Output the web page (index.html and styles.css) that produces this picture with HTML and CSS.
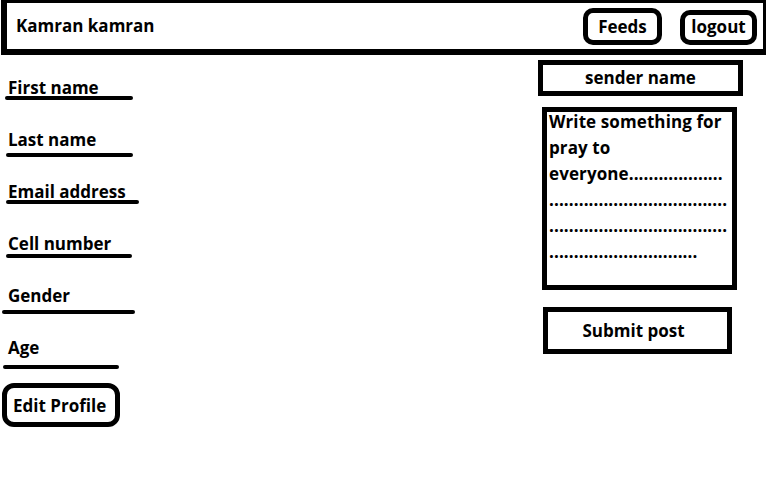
FILE: index.html
```html
<!DOCTYPE html>
<html>
<head>
<meta charset="utf-8">
<link rel="stylesheet" href="styles.css">
</head>
<body>
<header class="topbar">
  <div class="user-name">Kamran kamran</div>
  <nav class="nav">
    <div class="nav-btn nav-feeds">Feeds</div>
    <div class="nav-btn nav-logout">logout</div>
  </nav>
</header>
<main class="main">
  <section class="profile">
    <div class="field">
      <div class="label">First name</div>
      <div class="rule rule-1"></div>
    </div>
    <div class="field">
      <div class="label">Last name</div>
      <div class="rule rule-2"></div>
    </div>
    <div class="field">
      <div class="label">Email address</div>
      <div class="rule rule-3"></div>
    </div>
    <div class="field">
      <div class="label">Cell number</div>
      <div class="rule rule-4"></div>
    </div>
    <div class="field">
      <div class="label">Gender</div>
      <div class="rule rule-5"></div>
    </div>
    <div class="field">
      <div class="label">Age</div>
      <div class="rule rule-6"></div>
    </div>
    <div class="edit-btn">Edit Profile</div>
  </section>
  <section class="composer">
    <div class="sender">sender name</div>
    <div class="post-box">
      <div class="post-text">Write something for<br>pray to<br>everyone...................<br>....................................<br>....................................<br>..............................</div>
    </div>
    <div class="submit">Submit post</div>
  </section>
</main>
</body>
</html>
```
FILE: styles.css
```css
* { box-sizing: border-box; }
html, body {
  margin: 0;
  padding: 0;
  background: #ffffff;
}
body {
  font-family: "Open Sans", "Liberation Sans", sans-serif;
  font-weight: 700;
  font-size: 17px;
  color: #000000;
  width: 768px;
  height: 480px;
  overflow: hidden;
}
.topbar {
  margin: 0 2px 0 1px;
  height: 55px;
  border-style: solid;
  border-color: #000;
  border-width: 3px 3px 6px 6px;
  display: flex;
  justify-content: space-between;
  align-items: flex-start;
  padding-left: 9px;
}
.user-name {
  line-height: 23px;
  margin-top: 11px;
}
.nav {
  display: flex;
  gap: 18px;
  margin-right: 6px;
}
.nav-btn {
  border: 5px solid #000;
  border-radius: 10px;
  display: flex;
  align-items: center;
  justify-content: center;
  line-height: 23px;
}
.nav-feeds {
  width: 79px;
  height: 37px;
  margin-top: 5px;
}
.nav-logout {
  width: 77px;
  height: 35px;
  margin-top: 7px;
  padding-bottom: 2px;
}
.main {
  display: grid;
  grid-template-columns: 538px auto;
}
.profile {
  padding-top: 23px;
  display: flex;
  flex-direction: column;
}
.field {
  height: 52px;
  display: flex;
  flex-direction: column;
}
.label {
  line-height: 20px;
  padding-left: 8px;
}
.rule {
  height: 4px;
  border-radius: 2px;
  background: #000;
}
.rule-1 { margin: -2px 0 0 5px; width: 128px; }
.rule-2 { margin: 3px 0 0 6px; width: 127px; }
.rule-3 { margin: -2px 0 0 6px; width: 133px; }
.rule-4 { margin: 0 0 0 6px; width: 126px; }
.rule-5 { margin: 4px 0 0 2px; width: 133px; }
.rule-6 { margin: 7px 0 0 3px; width: 116px; }
.edit-btn {
  margin: -7px 0 0 2px;
  width: 118px;
  height: 44px;
  border: 5px solid #000;
  border-radius: 12px;
  display: flex;
  align-items: center;
  padding-left: 6px;
  line-height: 23px;
}
.composer {
  padding-top: 5px;
  display: flex;
  flex-direction: column;
  align-items: flex-start;
}
.sender {
  width: 205px;
  height: 36px;
  border: 5px solid #000;
  display: flex;
  align-items: center;
  justify-content: center;
  line-height: 23px;
  padding-bottom: 2px;
}
.post-box {
  margin: 11px 0 0 4px;
  width: 195px;
  height: 183px;
  border: 5px solid #000;
  padding-left: 2px;
  overflow: hidden;
}
.post-text {
  margin-top: -3px;
  line-height: 26px;
  white-space: nowrap;
  letter-spacing: 0.1px;
}
.submit {
  margin: 17px 0 0 5px;
  width: 189px;
  height: 47px;
  border: 5px solid #000;
  display: flex;
  align-items: center;
  justify-content: center;
  padding-right: 8px;
  line-height: 23px;
}
```
